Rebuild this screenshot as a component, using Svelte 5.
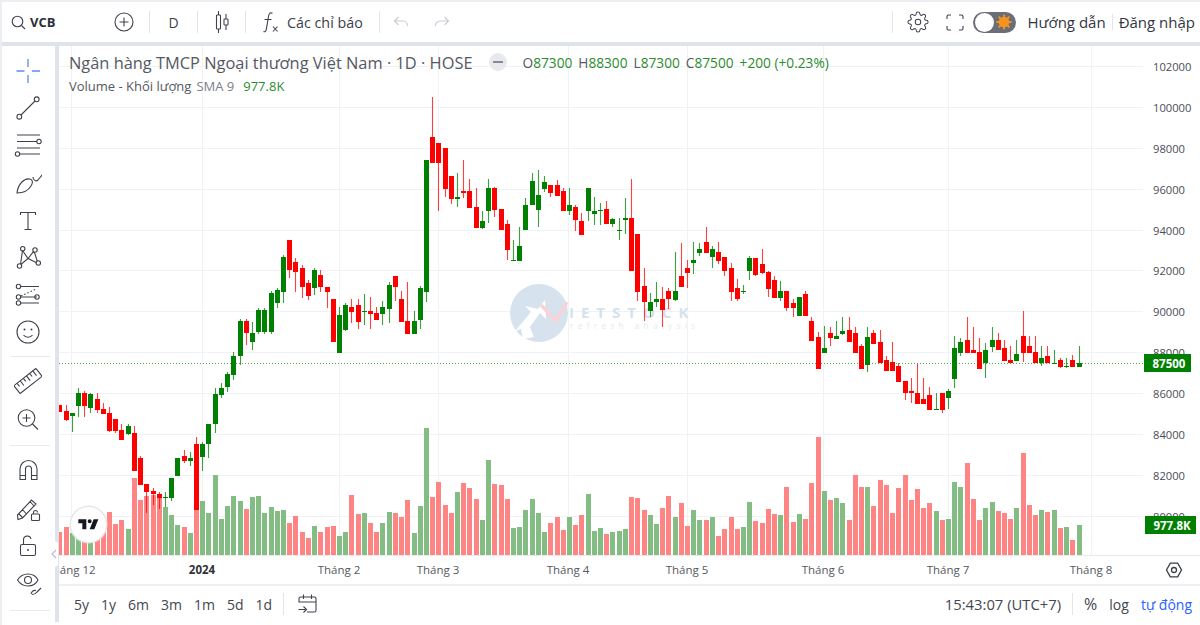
<script>
    // [colour, body top, body bottom, wick top, wick bottom, volume top], all in page pixels
    const bars = [
        ['r',405,412,405,412,532],['r',411,420,405,421,527],['g',413,416,413,432,533],['g',393,406,388,417,537],
        ['r',393,406,391,417,536],['g',394,408,393,413,538],['r',399,410,393,413,528],['r',409,414,403,414,531],
        ['r',413,431,407,432,512],['r',419,431,419,433,524],['r',430,440,424,440,520],['g',426,434,424,435,529],
        ['r',433,471,426,471,478],['r',458,485,456,485,500],['r',484,492,484,513,496],['r',491,494,488,505,495],
        ['r',494,498,492,509,498],['g',497,498,492,507,507],['g',478,498,478,501,515],['g',458,476,458,476,525],
        ['r',456,461,450,463,527],['g',458,461,452,466,533],['r',444,510,437,510,508],['g',444,457,442,471,501],
        ['g',424,444,424,458,513],['g',394,424,388,433,475],['g',388,395,383,398,519],['g',374,387,372,392,506],
        ['g',356,375,352,380,496],['g',321,356,319,365,501],['r',321,333,319,345,509],['g',333,342,322,350,497],
        ['g',310,332,308,334,496],['g',310,332,308,334,513],['g',293,332,291,334,507],['g',290,303,288,308,511],
        ['g',257,292,255,303,510],['r',240,270,240,278,523],['r',262,272,258,292,516],['r',268,287,265,298,532],
        ['r',283,296,280,300,538],['g',270,288,268,295,526],['r',275,287,270,292,532],['r',287,292,287,308,527],
        ['r',299,342,299,342,526],['g',315,353,307,353,536],['g',305,330,303,331,532],['r',307,312,299,323,495],
        ['r',305,322,299,329,514],['g',311,312,294,325,513],['r',311,314,297,329,523],['r',313,320,307,320,532],
        ['g',307,314,301,325,523],['g',285,309,282,323,512],['r',276,287,276,301,513],['r',299,322,291,322,517],
        ['r',321,334,282,334,500],['g',321,334,311,334,533],['g',288,320,286,329,506],['g',160,292,160,302,428],
        ['r',137,163,97,163,497],['r',143,163,143,211,482],['r',148,189,148,197,505],['r',176,199,176,204,513],
        ['g',197,199,173,207,492],['r',191,193,160,198,483],['r',191,208,179,208,488],['r',207,228,188,228,499],
        ['g',221,228,211,229,520],['g',188,211,179,223,460],['r',188,210,187,217,484],['r',209,230,209,230,485],
        ['r',224,250,220,260,499],['g',260,261,240,261,528],['g',246,261,227,261,527],['g',205,230,198,230,510],
        ['g',181,205,173,205,499],['g',195,210,170,227,513],['g',182,189,176,192,532],['r',185,193,185,197,523],
        ['r',185,196,180,196,517],['r',191,211,188,211,530],['g',205,211,188,215,517],['r',207,220,205,231,525],
        ['r',221,235,213,235,515],['g',188,211,188,221,494],['g',211,214,197,225,531],['g',210,211,203,225,528],
        ['r',209,224,201,224,534],['g',219,224,218,227,532],['g',230,231,218,240,531],['g',218,220,198,234,529],
        ['r',218,271,179,271,497],['r',234,292,234,301,498],['r',286,302,268,321,510],['g',302,311,293,317,515],
        ['g',299,302,282,307,524],['r',299,310,287,327,508],['r',291,299,288,309,496],['g',291,300,252,301,517],
        ['r',276,287,243,287,503],['r',268,273,260,288,526],['g',260,263,242,274,510],['g',249,253,243,256,520],
        ['r',242,253,227,253,520],['g',249,257,246,268,517],['r',252,261,242,264,536],['r',257,271,257,276,529],
        ['r',268,292,263,301,517],['r',288,299,279,301,529],['g',291,292,285,294,527],['g',258,271,256,280,502],
        ['r',258,275,258,276,521],['r',264,273,249,274,523],['r',272,289,271,297,509],['r',280,298,276,298,514],
        ['g',291,298,281,301,515],['r',291,308,291,311,487],['r',303,308,299,317,522],['g',297,316,297,316,514],
        ['r',294,316,291,316,519],['r',321,341,317,341,483],['r',337,369,332,369,437],['g',348,353,326,353,491],
        ['r',333,338,327,346,500],['g',336,339,321,339,498],['g',331,334,317,335,503],['r',330,342,317,342,520],
        ['r',333,353,327,353,475],['r',346,369,344,369,487],['g',337,365,327,372,487],['r',333,344,330,344,506],
        ['r',342,363,330,363,480],['r',360,371,356,371,485],['r',362,371,342,371,513],['r',366,382,363,382,488],
        ['r',381,393,381,400,475],['r',391,393,378,403,500],['r',393,404,364,404,489],['r',399,404,378,404,508],
        ['r',395,410,387,410,503],['g',409,410,393,410,511],['r',393,410,393,413,520],['g',391,398,389,409,519],
        ['g',348,379,336,388,482],['g',342,353,338,356,487],['r',340,353,317,353,463],['r',350,353,327,353,499],
        ['r',352,369,338,369,520],['g',350,363,343,378,508],['g',340,347,327,352,502],['r',340,350,333,350,511],
        ['r',348,361,340,361,513],['r',360,363,346,363,519],['g',354,361,340,361,508],['r',336,353,311,362,453],
        ['r',346,353,336,353,505],['r',352,363,336,363,515],['g',358,363,346,366,510],['r',356,363,346,363,512],
        ['g',363,364,350,364,510],['r',360,367,358,368,528],['g',366,367,358,368,527],['r',360,367,355,367,540],
        ['g',363,367,346,367,525]
    ];
    const colors = { r: '#ff0000', g: '#008000' };
    const volColors = { r: '#ff8585', g: '#84bd84' };
    const base = 555;
    const xOf = (i) => Math.round(59.3 + i * 6.215);

    const hLines = [66, 107, 148, 189, 230, 270, 311, 352, 393, 434, 475, 516];
    const prices = [102000, 100000, 98000, 96000, 94000, 92000, 90000, 88000, 86000, 84000, 82000, 80000];
    const months = [
        { x: 71, label: 'Tháng 12' }, { x: 202, label: '2024', bold: true }, { x: 339, label: 'Tháng 2' },
        { x: 438, label: 'Tháng 3' }, { x: 568, label: 'Tháng 4' }, { x: 687, label: 'Tháng 5' },
        { x: 823, label: 'Tháng 6' }, { x: 948, label: 'Tháng 7' }, { x: 1091, label: 'Tháng 8' }
    ];
    const ranges = ['5y', '1y', '6m', '3m', '1m', '5d', '1d'];
    const gearPath = 'M19.4 15a1.65 1.65 0 0 0 .33 1.82l.06.06a2 2 0 0 1 0 2.83 2 2 0 0 1-2.83 0l-.06-.06a1.65 1.65 0 0 0-1.82-.33 1.65 1.65 0 0 0-1 1.51V21a2 2 0 0 1-2 2 2 2 0 0 1-2-2v-.09A1.65 1.65 0 0 0 9 19.4a1.65 1.65 0 0 0-1.82.33l-.06.06a2 2 0 0 1-2.83 0 2 2 0 0 1 0-2.83l.06-.06a1.65 1.65 0 0 0 .33-1.82 1.65 1.65 0 0 0-1.51-1H3a2 2 0 0 1-2-2 2 2 0 0 1 2-2h.09A1.65 1.65 0 0 0 4.6 9a1.65 1.65 0 0 0-.33-1.82l-.06-.06a2 2 0 0 1 0-2.83 2 2 0 0 1 2.83 0l.06.06a1.65 1.65 0 0 0 1.82.33H9a1.65 1.65 0 0 0 1-1.51V3a2 2 0 0 1 2-2 2 2 0 0 1 2 2v.09a1.65 1.65 0 0 0 1 1.51 1.65 1.65 0 0 0 1.82-.33l.06-.06a2 2 0 0 1 2.83 0 2 2 0 0 1 0 2.83l-.06.06a1.65 1.65 0 0 0-.33 1.82V9a1.65 1.65 0 0 0 1.51 1H21a2 2 0 0 1 2 2 2 2 0 0 1-2 2h-.09a1.65 1.65 0 0 0-1.51 1z';
</script>

<div class="app">
    <header class="topbar">
        <div class="symbol">
            <svg width="15" height="15" viewBox="0 0 15 15"><circle cx="6.500" cy="6.500" r="5.300"/><path d="M10.500 10.500 14 14"/></svg>
            <span>VCB</span>
        </div>
        <button class="btn plus" aria-label="add">
            <svg width="20" height="20" viewBox="0 0 20 20"><circle cx="10" cy="10" r="9"/><path d="M10 5.500v9M5.500 10h9"/></svg>
        </button>
        <i class="sep first"></i>
        <button class="btn res">D</button>
        <i class="sep"></i>
        <button class="btn res" aria-label="candles">
            <svg width="16" height="22" viewBox="0 0 16 22"><path d="M4.500 0v4M4.500 18v4M12 3v5M12 14v5"/><rect x="2.500" y="4" width="4" height="14" rx=".8"/><rect x="10" y="8" width="4" height="6" rx=".8"/></svg>
        </button>
        <i class="sep"></i>
        <button class="btn indicators">
            <svg width="16" height="21" viewBox="0 0 16 21"><path d="M9.500 1.200C7 .3 6 1.600 5.600 4L3.400 16.800C3 19.400 2 20.200 .5 19.600M1.500 7.500h7M10 14.500l4.500 5M14.500 14.500l-4.500 5"/></svg>
            <span>Các chỉ báo</span>
        </button>
        <i class="sep"></i>
        <button class="btn hist" aria-label="undo">
            <svg width="16" height="12" viewBox="0 0 16 12"><path d="M5.500 1 1.500 5l4 4M1.500 5H10c2.500 0 4.500 2 4.500 5"/></svg>
        </button>
        <button class="btn hist" aria-label="redo">
            <svg width="16" height="12" viewBox="0 0 16 12"><path d="M10.500 1l4 4-4 4M14.500 5H6c-2.500 0-4.500 2-4.500 5"/></svg>
        </button>

        <div class="right">
            <i class="sep"></i>
            <button class="btn gear" aria-label="settings">
                <svg width="22" height="22" viewBox="0 0 24 24"><circle cx="12" cy="12" r="3"/><path d={gearPath}/></svg>
            </button>
            <button class="btn full" aria-label="fullscreen">
                <svg width="18" height="17" viewBox="0 0 18 17"><path d="M1 5V2.500C1 1.700 1.700 1 2.500 1H5M13 1h2.500c.8 0 1.500.7 1.500 1.500V5M17 12v2.500c0 .8-.7 1.500-1.500 1.500H13M5 16H2.500C1.700 16 1 15.300 1 14.500V12"/></svg>
            </button>
            <div class="toggle">
                <span class="knob"></span>
                <svg class="sun" width="16" height="16" viewBox="0 0 16 16">
                    <circle cx="8" cy="8" r="4.400"/>
                    <path d="M8 .5v2.500M8 13v2.500M.5 8H3M13 8h2.500M2.700 2.700l1.800 1.800M11.500 11.500l1.800 1.800M13.300 2.700l-1.800 1.800M4.500 11.500l-1.800 1.800"/>
                </svg>
            </div>
            <a class="link guide" href="#guide">Hướng dẫn</a>
            <i class="sep short"></i>
            <a class="link" href="#login">Đăng nhập</a>
        </div>
    </header>

    <div class="main">
        <nav class="tools">
            <div class="tool">
                <svg width="28" height="28" viewBox="0 0 28 28" class="blue"><path d="M2.500 14h8M18 14h8M14 2v8M14 18v8"/></svg>
            </div>
            <div class="tool">
                <svg width="28" height="28" viewBox="0 0 28 28"><path d="M7 21 21 7"/><circle cx="5.300" cy="22.700" r="2.400"/><circle cx="22.700" cy="5.300" r="2.400"/></svg>
            </div>
            <div class="tool">
                <svg width="28" height="28" viewBox="0 0 28 28"><path d="M3 4h23M3 10.500h20M3 17h23M6 23h20"/><circle cx="25" cy="10.500" r="2.200"/><circle cx="3.500" cy="23" r="2.200"/></svg>
            </div>
            <div class="tool">
                <svg width="28" height="28" viewBox="0 0 28 28"><path d="M3 24C4 15 10 9 16 10c3 .6 3 4 1 7-3 5-9 7-14 7ZM19 8c0 3 3 5 5 3l5-6"/></svg>
            </div>
            <div class="tool">
                <svg width="28" height="28" viewBox="0 0 28 28"><path d="M6.500 9V6.500h15V9M14 6.500v17M10.500 23.500h7"/></svg>
            </div>
            <div class="tool">
                <svg width="28" height="28" viewBox="0 0 28 28"><path d="M6.500 21.500 8.500 7.500 14 15.500 20 8l4 12.500-10-5-7 6Z"/><g class="filled"><circle cx="5.500" cy="23" r="2.200"/><circle cx="8.700" cy="5.700" r="2.200"/><circle cx="21" cy="7" r="2.200"/><circle cx="24.300" cy="20" r="2.200"/></g></svg>
            </div>
            <div class="tool">
                <svg width="28" height="28" viewBox="0 0 28 28"><path d="M7 6.500h18M7 17h16M7 23h18"/><path class="dots" d="M7 16 22 9"/><circle cx="4.500" cy="6.500" r="2.200"/><circle cx="4.500" cy="17" r="2.200"/><circle cx="23" cy="17" r="2.200"/><circle cx="4.500" cy="23" r="2.200"/></svg>
            </div>
            <div class="tool">
                <svg width="28" height="28" viewBox="0 0 28 28"><circle cx="14" cy="14" r="11"/><circle cx="10.500" cy="11.500" r="1" class="solid"/><circle cx="17.500" cy="11.500" r="1" class="solid"/><path d="M9.500 17c2 3 7 3 9 0"/></svg>
            </div>
            <hr />
            <div class="tool mid">
                <svg width="28" height="28" viewBox="0 0 28 28"><g transform="rotate(-38 14 14)"><rect x="0" y="9" width="28" height="10" rx=".5"/><path d="M4 9v4M8 9v6M12 9v4M16 9v6M20 9v4M24 9v6"/></g></svg>
            </div>
            <div class="tool mid2">
                <svg width="28" height="28" viewBox="0 0 28 28"><circle cx="12.500" cy="13" r="8.300"/><path d="m18.500 19 5.500 5.500M12.500 9v8M8.500 13h8"/></svg>
            </div>
            <hr class="second" />
            <div class="tool">
                <svg width="28" height="28" viewBox="0 0 28 28"><path d="M6 23.500V13a8.500 8.500 0 0 1 17 0v10.500h-5.500V13a3 3 0 0 0-6 0v10.500Zm0-4h5.500m6 0H23"/></svg>
            </div>
            <div class="tool">
                <svg width="28" height="28" viewBox="0 0 28 28"><path d="M3.500 21 4 25.500 8.500 24 22 10l-4.500-4Zm1.500-1 4 4M8 15l4 4.500M16 7.500l4 4.500"/><rect x="17.500" y="20" width="8" height="6.500" rx="1"/><path d="M19.500 20v-1.500a2 2 0 0 1 4 0"/></svg>
            </div>
            <div class="tool low">
                <svg width="28" height="28" viewBox="0 0 28 28"><rect x="6.500" y="12.500" width="15" height="11" rx="1.500"/><path d="M9.500 12.500V8a3.800 3.800 0 0 1 7.500-1"/><circle cx="14" cy="18" r="1" class="solid"/></svg>
            </div>
            <div class="tool">
                <svg width="28" height="28" viewBox="0 0 28 28"><path d="M3.500 10C6 6 10 4 14 4s8 2 10 6c-2 4-6 6-10 6s-8-2-10.500-6Z"/><circle cx="14" cy="10" r="3.500"/><path d="M17 24c1-3 3-4 5-3.500M23 22l4-4M18 24.500c2 0 4-1 5-2.500"/></svg>
            </div>
            <hr class="third" />
        </nav>
        <button class="collapse" aria-label="collapse">
            <svg width="6" height="10" viewBox="0 0 6 10"><path d="M5 1 1 5l4 4"/></svg>
        </button>

        <section class="workspace">
            <div class="chart">
                <svg class="plot" width="1141" height="538" viewBox="59 46 1141 538">
                    {#each hLines as y}
                        <line class="grid" x1="59" x2="1143" y1={y + 0.5} y2={y + 0.5} />
                    {/each}
                    {#each months as m}
                        <line class="grid" x1={m.x + 0.5} x2={m.x + 0.5} y1="46" y2="555" />
                    {/each}

                    <!-- watermark sits under the candles -->
                    <g class="mark">
                        <circle cx="539" cy="313" r="29" fill="#d6e3ef" />
                        <path d="M515 331 531 312l-6-6 13 3 7-9 1 19-6-6-10 14 4 10-11 2-2-10Z" fill="#fff" />
                        <path d="M541 305 556 321 567 302" class="mark-v" />
                        <text x="569" y="318" class="mark-name">IETSTOCK</text>
                        <text x="570" y="329" class="mark-sub">refresh analysis</text>
                    </g>

                    {#each bars as b, i}
                        <rect x={xOf(i) - 2} y={b[5]} width="5" height={base - b[5]} fill={volColors[b[0]]} />
                    {/each}
                    {#each bars as b, i}
                        <line x1={xOf(i) + 0.5} x2={xOf(i) + 0.5} y1={b[3]} y2={b[4]} stroke={colors[b[0]]} stroke-opacity="0.75" />
                        <rect x={xOf(i) - 2} y={b[1]} width="5" height={Math.max(b[2] - b[1], 1)} fill={colors[b[0]]} />
                    {/each}

                    <line class="last" x1="59" x2="1144" y1="363.500" y2="363.500" />

                    {#each prices as p, i}
                        <text class="price" x="1153" y={hLines[i] + 4.500}>{p}</text>
                    {/each}
                    <rect x="1144" y="354" width="47" height="18" fill="#008000" />
                    <text class="badge" x="1169" y="367.500">87500</text>
                    <rect x="1145" y="516" width="51" height="18" fill="#008000" />
                    <text class="badge" x="1172" y="529.500">977.8K</text>

                    <line class="axis" x1="59" x2="1200" y1="555.500" y2="555.500" />
                    {#each months as m}
                        <text class="month" class:bold={m.bold} x={m.x} y="574">{m.label}</text>
                    {/each}
                    <g class="hex">
                        <path d="M1166.500 570l3.800-6.800h7.400l3.800 6.800-3.800 6.800h-7.400Z" />
                        <circle cx="1174" cy="570" r="2.500" />
                    </g>
                </svg>

                <div class="logo">
                    <svg width="24" height="19" viewBox="0 0 36 28"><path d="M14 6H2v6h6v9h6V6Zm12 15h-7l6-15h7l-6 15Zm-7-9a3 3 0 1 0 0-6 3 3 0 0 0 0 6Z"/></svg>
                </div>

                <div class="legend">
                    <div class="row title">
                        <span class="name">Ngân hàng TMCP Ngoại thương Việt Nam · 1D · HOSE</span>
                        <i class="dash"></i>
                        <span class="ohlc"><b>O</b>87300</span>
                        <span class="ohlc"><b>H</b>88300</span>
                        <span class="ohlc"><b>L</b>87300</span>
                        <span class="ohlc"><b>C</b>87500</span>
                        <span class="ohlc change">+200 (+0.23%)</span>
                    </div>
                    <div class="row sub">
                        <span>Volume - Khối lượng</span>
                        <span class="soft">SMA 9</span>
                        <span class="val">977.8K</span>
                    </div>
                </div>
            </div>

            <footer class="bottombar">
                <div class="ranges">
                    {#each ranges as r}
                        <span>{r}</span>
                    {/each}
                </div>
                <i class="sep"></i>
                <svg class="cal" width="20" height="20" viewBox="0 0 20 20"><path d="M1 8.500V4.500C1 3.700 1.700 3 2.500 3h14c.8 0 1.500.7 1.500 1.500v12c0 .8-.7 1.500-1.500 1.500H9M1 8h17M5.500 .5V5M13.500 .5V5M.5 15.500h7M5.500 12.500l3 3-3 3"/></svg>
                <div class="status">
                    <span class="clock">15:43:07 (UTC+7)</span>
                    <i class="sep"></i>
                    <span class="pct">%</span>
                    <span class="log">log</span>
                    <span class="auto">tự động</span>
                </div>
            </footer>
        </section>
    </div>
</div>

<style>
    :global(body) {
        margin: 0;
        background: #fff;
    }
    .app {
        box-sizing: border-box;
        width: 1200px;
        height: 625px;
        border-top: 2px solid #eceef2;
        border-left: 2px solid #eceef2;
        font-family: "Open Sans", "Noto Sans", sans-serif;
        color: #3d4049;
        overflow: hidden;
    }
    svg {
        display: block;
        fill: none;
        stroke: #3f424c;
        stroke-width: 1.1;
    }
    button {
        border: none;
        background: none;
        padding: 0;
        font: inherit;
        color: inherit;
        display: flex;
        align-items: center;
        justify-content: center;
    }
    .sep {
        display: block;
        flex: none;
        width: 1px;
        height: 22px;
        background: #e3e5ea;
    }

    .topbar {
        display: flex;
        align-items: center;
        height: 40px;
        background: #fff;
        border-bottom: 4px solid #e0e3eb;
    }
    .symbol {
        width: 103px;
        display: flex;
        align-items: center;
        gap: 4px;
        padding-left: 9px;
        box-sizing: border-box;
        font-weight: 700;
        font-size: 13px;
        color: #2b2e37;
    }
    .plus { width: 38px; }
    .sep.first { margin-left: 6px; }
    .res {
        width: 47px;
        font-size: 14px;
    }
    .indicators {
        width: 133px;
        justify-content: flex-start;
        padding-left: 17px;
        box-sizing: border-box;
        gap: 8px;
        font-size: 14.300px;
        white-space: nowrap;
    }
    .hist { width: 41px; }
    .hist svg { stroke: #c8cbd3; }
    .right {
        margin-left: auto;
        display: flex;
        align-items: center;
        padding-right: 5px;
    }
    .gear { width: 50px; }
    .full { width: 24px; }
    .toggle {
        position: relative;
        width: 43px;
        height: 21px;
        margin-left: 6px;
        border-radius: 11px;
        background: #6b6e78;
    }
    .knob {
        position: absolute;
        left: 2px;
        top: 1px;
        width: 19px;
        height: 19px;
        border-radius: 50%;
        background: #fff;
    }
    .sun {
        position: absolute;
        left: 23px;
        top: 2.500px;
        stroke: #f7941d;
        stroke-width: 1.800;
    }
    .sun circle { fill: #f7941d; }
    .link {
        font-size: 15px;
        color: #33363f;
        text-decoration: none;
        white-space: nowrap;
    }
    .guide { margin-left: 12px; }
    .sep.short {
        height: 16px;
        margin: 0 6px;
    }

    .main {
        position: relative;
        display: flex;
        height: 576px;
        background: #e0e3eb;
    }
    .tools {
        box-sizing: border-box;
        width: 53px;
        margin-right: 4px;
        padding-top: 6px;
        background: #fff;
        flex: none;
    }
    .tool {
        height: 37.300px;
        display: flex;
        align-items: center;
        justify-content: center;
        padding-right: 1px;
    }
    .tool.mid { margin-top: 5px; }
    .tool.mid2 { height: 38px; }
    .tool.low { height: 39px; }
    .tools hr {
        margin: 6px 5px 5px 8px;
        border: none;
        height: 1px;
        background: #e8eaee;
    }
    .tools hr.second { margin: 7px 5px 6px 8px; }
    .tools hr.third { margin: 7px 5px 0 8px; }
    .blue { stroke: #5b8def; stroke-width: 1.300; }
    .filled circle { fill: #fff; }
    .solid { fill: #3f424c; stroke: none; }
    .dots { stroke-dasharray: 1.500 2; }
    .collapse {
        position: absolute;
        left: 47px;
        top: 495px;
        width: 9px;
        height: 26px;
        background: #fff;
        border-radius: 4px;
    }
    .collapse svg { stroke: #b8bcc6; }

    .workspace {
        flex: 1;
        min-width: 0;
        display: flex;
        flex-direction: column;
        background: #fff;
    }
    .chart {
        position: relative;
        height: 538px;
    }
    .plot { stroke: none; }
    .plot text {
        stroke: none;
        font-family: "Open Sans", "Noto Sans", sans-serif;
    }
    .grid { stroke: #f0f2f6; stroke-width: 1; }
    .axis { stroke: #e8eaee; stroke-width: 1; }
    .last { stroke: #008000; stroke-width: 1; stroke-dasharray: 1 2; opacity: .7; }
    .mark-v {
        fill: none;
        stroke: #f9d3d8;
        stroke-width: 3.500;
    }
    .mark-name {
        font-size: 15px;
        font-weight: 700;
        letter-spacing: 7px;
        fill: #d5e2ee;
    }
    .mark-sub {
        font-size: 8.500px;
        letter-spacing: 4.200px;
        fill: #e6ebf0;
    }
    .price {
        font-size: 11.200px;
        fill: #4a4d57;
    }
    .badge {
        font-size: 11.500px;
        font-weight: 700;
        text-anchor: middle;
        fill: #fff;
    }
    .month {
        font-size: 11.500px;
        text-anchor: middle;
        fill: #55585f;
    }
    .month.bold {
        font-weight: 700;
        fill: #2f323a;
    }
    .hex path, .hex circle { stroke: #3a3d46; stroke-width: 1.300; }
    .logo {
        position: absolute;
        left: 12px;
        top: 461px;
        width: 35px;
        height: 35px;
        border-radius: 50%;
        background: #fff;
        box-shadow: 0 0 0 1.500px #e4e6eb;
        display: flex;
        align-items: center;
        justify-content: center;
    }
    .logo svg {
        fill: #131722;
        stroke: none;
    }
    .legend {
        position: absolute;
        left: 10px;
        top: 5px;
    }
    .row {
        display: flex;
        align-items: center;
        white-space: nowrap;
    }
    .title {
        height: 22px;
        font-size: 16.400px;
    }
    .name { color: #55585f; }
    .dash {
        position: relative;
        width: 18px;
        height: 18px;
        margin: 0 16px;
        border-radius: 50%;
        background: #e8e9ec;
    }
    .dash::after {
        content: "";
        position: absolute;
        left: 4px;
        top: 8px;
        width: 10px;
        height: 2px;
        background: #868a95;
    }
    .ohlc {
        font-size: 13.700px;
        color: #2b8c2e;
        margin-right: 6px;
    }
    .ohlc b {
        font-weight: 400;
        color: #55585f;
    }
    .sub {
        height: 24px;
        margin-top: 1px;
        gap: 5px;
        font-size: 13px;
        color: #55585f;
    }
    .soft { color: #7b7e86; }
    .val { margin-left: 4px; color: #2b8c2e; }

    .bottombar {
        flex: 1;
        display: flex;
        align-items: center;
        border-top: 2px solid #eef0f3;
        box-sizing: border-box;
        background: #fff;
    }
    .ranges {
        display: flex;
        gap: 12px;
        padding-left: 15px;
        font-size: 14px;
        color: #43464f;
    }
    .bottombar .sep { margin-left: 11px; }
    .cal { margin-left: 14px; }
    .status {
        margin-left: auto;
        padding-right: 8px;
        display: flex;
        align-items: center;
        font-size: 14.800px;
        color: #43464f;
    }
    .pct { margin-left: 11px; font-size: 16px; }
    .log { margin-left: 12px; font-size: 14px; }
    .auto { margin-left: 12px; font-size: 14px; color: #2962ff; }
</style>
